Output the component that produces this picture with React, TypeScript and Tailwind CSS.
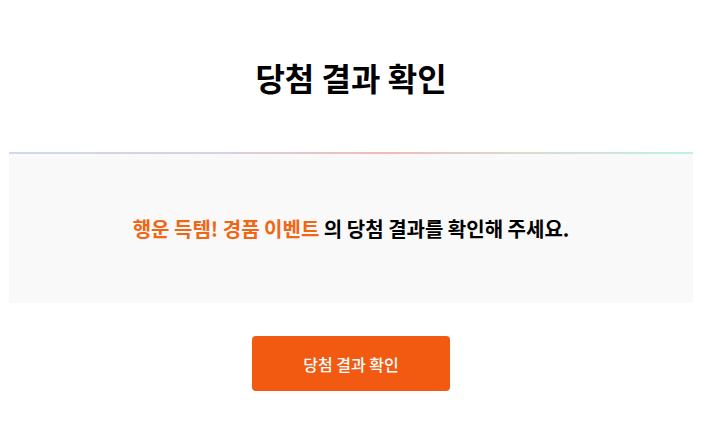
const font = { fontFamily: '"Noto Sans CJK KR", "Noto Sans", sans-serif' };

export default function App() {
  return (
    <div className="min-h-screen bg-white" style={font}>
      <div className="ml-[9px] w-[684px]">
        <div className="flex h-[152px] items-center justify-center pt-[2px]">
          <h1 className="text-[32px] font-bold text-black">당첨 결과 확인</h1>
        </div>
        <div className="h-[2px] bg-[linear-gradient(90deg,#cdd9ef_0%,#d8d2e6_30%,#ecbdb1_55%,#d9dccf_75%,#bff0ea_100%)]" />
        <div className="flex h-[149px] items-center justify-center bg-[#f9f9f9]">
          <p className="text-[20px] font-bold text-black">
            <span className="text-[#f26513]">행운 득템! 경품 이벤트</span> 의 당첨 결과를 확인해 주세요.
          </p>
        </div>
        <div className="mt-[33px] flex justify-center">
          <button
            type="button"
            className="h-[55px] w-[198px] rounded-[4px] bg-[#f25a12] text-[16px] font-medium text-white"
          >
            당첨 결과 확인
          </button>
        </div>
      </div>
    </div>
  );
}
